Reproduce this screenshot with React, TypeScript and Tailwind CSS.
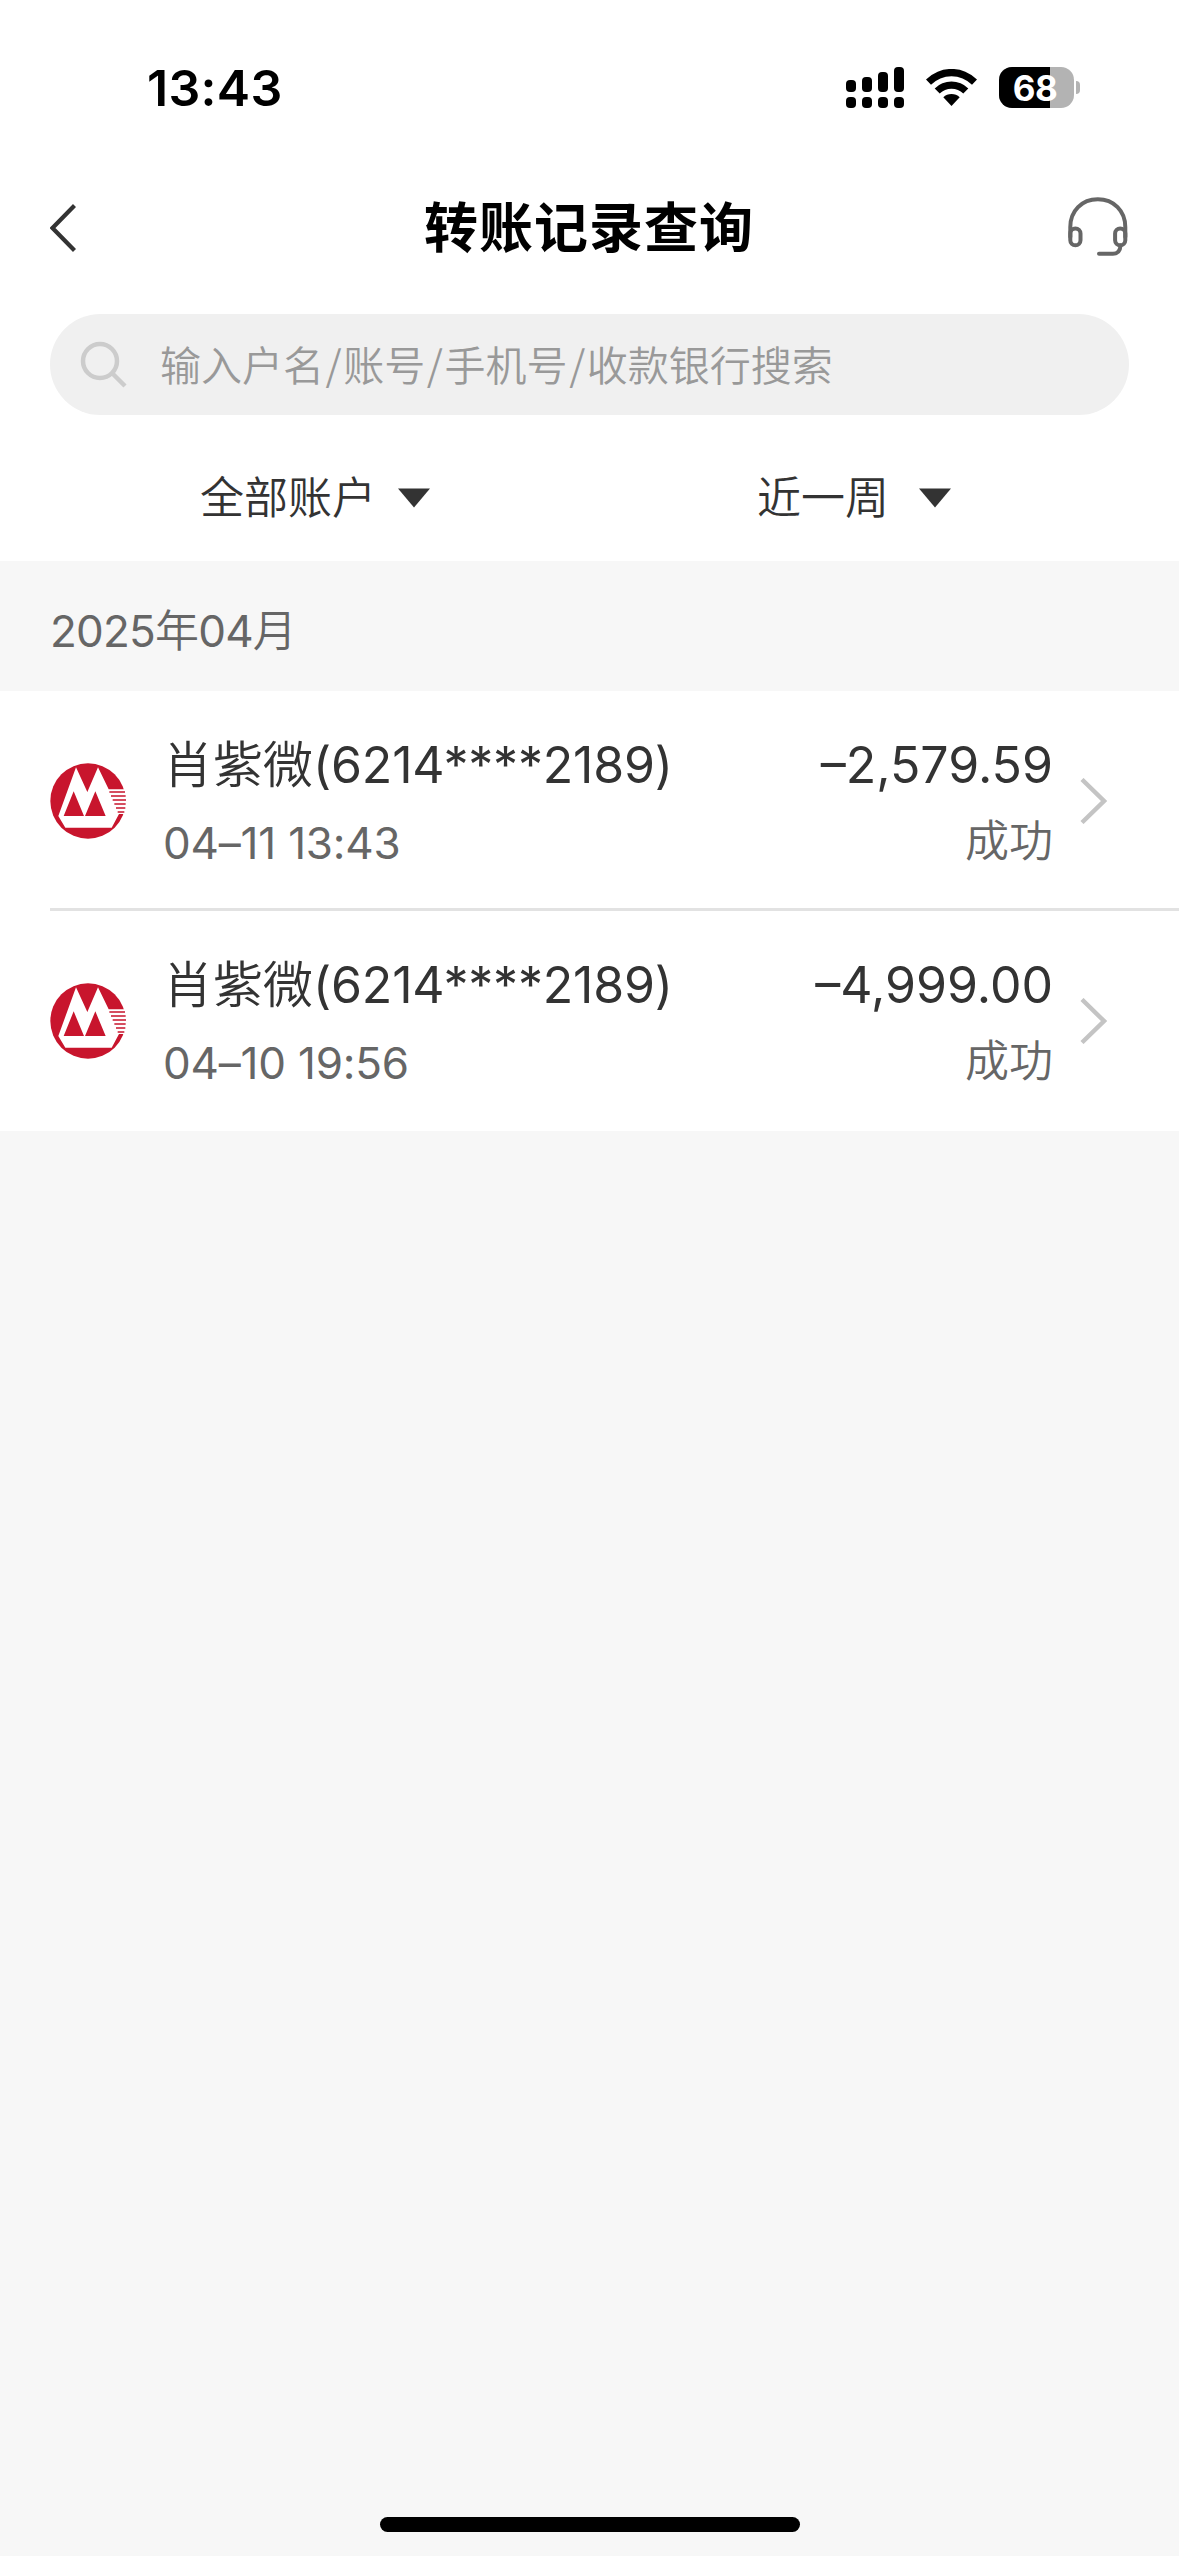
import { Fragment } from "react";

const transfers = [
  { name: "肖紫微", card: "(6214****2189)", time: "04–11 13:43", amount: "–2,579.59", status: "成功" },
  { name: "肖紫微", card: "(6214****2189)", time: "04–10 19:56", amount: "–4,999.00", status: "成功" },
];

const searchFields = ["输入户名", "账号", "手机号", "收款银行搜索"];

const signalBars = [12, 15, 20, 25];

function StatusBar() {
  return (
    <div className="h-[176px] flex justify-between pl-[147px] pr-[98px] pt-[67px]">
      <span className="h-[41px] leading-[43px] text-[50px] font-semibold text-black tracking-[0.3px]">13:43</span>
      <div className="flex h-[41px]">
        <div className="flex gap-[6px] mr-[22px]">
          {signalBars.map((height) => (
            <div key={height} className="w-[10px] flex flex-col justify-end gap-[5px]">
              <div className="bg-black rounded-[4px]" style={{ height }} />
              <div className="h-[11px] bg-black rounded-[4px]" />
            </div>
          ))}
        </div>
        <svg className="mt-[2px] mr-[22px]" width="51" height="37" viewBox="0 0 51 37">
          <path d="M0 10.5A36 36 0 0 1 51 10.5L46 15.8A29 29 0 0 0 5 15.8Z" />
          <path d="M8.7 19.4A24 24 0 0 1 42.3 19.4L37.3 24.5A17 17 0 0 0 13.7 24.5Z" />
          <path d="M17.3 28.2A12 12 0 0 1 33.7 28.2L25.5 37Z" />
        </svg>
        <div className="relative w-[75px] h-[41px] rounded-[13px] bg-[#b3b3b3]">
          <div className="w-[51px] h-full rounded-l-[13px] bg-black" />
          <span className="absolute inset-0 pr-[3px] text-center text-[35px] leading-[42px] font-bold text-white tracking-[-0.5px]">
            68
          </span>
        </div>
        <div className="ml-[2px] mr-px mt-[14px] w-[4px] h-[13px] rounded-r-full bg-[#b3b3b3]" />
      </div>
    </div>
  );
}

function Headset() {
  return (
    <svg className="mr-px" width="60" height="60" viewBox="0 0 60 60" fill="none" stroke="#666" strokeWidth="4" strokeLinecap="round">
      <path d="M2.3 40V30C2.3 14 13.8 2.3 29.8 2.3S57.3 14 57.3 30V40" />
      <rect x="2.3" y="31.5" width="10.2" height="16.8" rx="5.1" />
      <rect x="47.1" y="31.5" width="10.2" height="16.8" rx="5.1" />
      <path d="M52.5 48.5C52.2 54 49.5 56.7 45 56.7H31" />
    </svg>
  );
}

function BankLogo() {
  return (
    <svg className="mt-[72px] shrink-0" width="76" height="76" viewBox="0 0 228 228">
      <circle cx="114" cy="114" r="113" fill="#c8152d" />
      <path d="M78 13L112 87L144 13L176 79H230V153H207L185 194H46L25 159Z" fill="#fff" />
      <path d="M71 85L41 159H102ZM136 85L105 159H167Z" fill="#c8152d" />
      <path d="M178 87H225M183 99H227M188 111H228M193 123H227M198 135H226M203 147H223" stroke="#c8152d" strokeWidth="5" />
    </svg>
  );
}

function Caret() {
  return (
    <svg width="34" height="20" viewBox="0 0 34 20">
      <path d="M1 0.5H33L17 19.5Z" fill="#333" />
    </svg>
  );
}

export default function App() {
  return (
    <div className="w-[1179px] h-[2556px] flex flex-col bg-[#f7f7f7] font-['Inter','Noto_Sans_CJK_SC',sans-serif]">
      <header className="h-[561px] bg-white">
        <StatusBar />
        <div className="h-[102px] px-[50px] flex items-center justify-between">
          <svg className="mr-[34px] mt-px" width="26" height="50" viewBox="0 0 26 50" fill="none" stroke="#333" strokeWidth="4.2">
            <path d="M24.5 2.5L2.5 25L24.5 47.5" />
          </svg>
          <h1 className="pt-[3px] text-[54px] leading-[80px] tracking-[1px] font-bold text-black">转账记录查询</h1>
          <Headset />
        </div>
        <div className="mt-[36px] mx-[50px] h-[101px] rounded-full bg-[#f0f0f0] flex items-center">
          <svg className="ml-[30px] mt-px" width="48" height="48" viewBox="0 0 48 48" fill="none" stroke="#ccc" strokeWidth="4.5">
            <circle cx="20" cy="20" r="17" />
            <path d="M33 33L45 45" />
          </svg>
          <span className="ml-[32px] text-[41px] leading-[60px] text-[#999] font-[350]">
            {searchFields.map((field, i) => (
              <Fragment key={field}>
                {i > 0 && <span className="px-[1.6px] font-['Noto_Sans_CJK_SC',sans-serif]">/</span>}
                {field}
              </Fragment>
            ))}
          </span>
        </div>
        <div className="mt-[52px] flex text-[44px] leading-[60px] text-[#333] font-[350]">
          <button className="w-[757px] pl-[200px] flex items-center gap-[21px]">
            <span className="pt-px">全部账户</span>
            <Caret />
          </button>
          <button className="flex items-center gap-[29px]">
            <span className="pt-px">近一周</span>
            <Caret />
          </button>
        </div>
      </header>

      <div className="h-[130px] pl-[50px] leading-[141px] text-[44px] tracking-[-0.8px] text-[#666]">
        2025<span className="font-[350]">年</span>04<span className="font-[350]">月</span>
      </div>

      <ul className="bg-white">
        {transfers.map((item, i) => (
          <li key={item.time} className="pl-[50px]">
            <div className={i > 0 ? "h-[223px] flex border-t-[3px] border-[#e2e2e2]" : "h-[217px] flex"}>
              <BankLogo />
              <div className="ml-[37px] pt-[39px] flex-1">
                <div className="text-[50px] leading-[70px] text-[#333]">
                  <span className="font-[350]">{item.name}</span>
                  <span className="tracking-[-0.2px]">{item.card}</span>
                </div>
                <div className="mt-[11px] text-[44px] leading-[64px] tracking-[-0.2px] text-[#666]">{item.time}</div>
              </div>
              <div className="pt-[39px] text-right">
                <div className="text-[50px] leading-[70px] text-[#333]">{item.amount}</div>
                <div className="mt-[9px] text-[44px] leading-[64px] text-[#666] font-[350]">{item.status}</div>
              </div>
              <svg className="mt-[87px] ml-[27px] mr-[72px]" width="27" height="46" viewBox="0 0 27 46" fill="none" stroke="#c4c4c4" strokeWidth="4.4">
                <path d="M2 1.5L24 23L2 44.5" />
              </svg>
            </div>
          </li>
        ))}
      </ul>

      <div className="mt-auto mb-[24px] mx-auto w-[420px] h-[15px] rounded-full bg-black" />
    </div>
  );
}
